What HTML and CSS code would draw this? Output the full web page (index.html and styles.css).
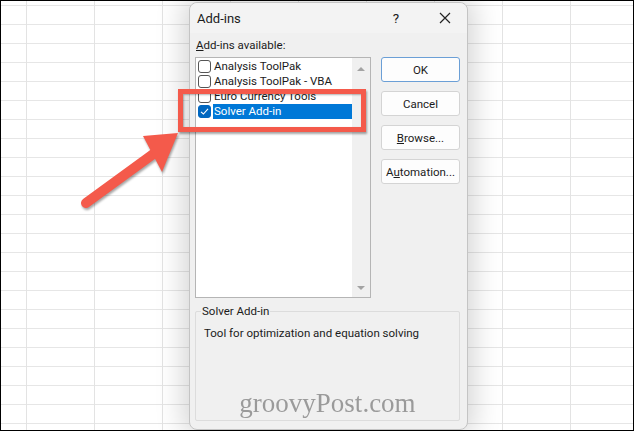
FILE: index.html
```html
<!DOCTYPE html>
<html lang="en">
<head>
    <meta charset="UTF-8">
    <title>Add-ins</title>
    <link rel="stylesheet" href="styles.css">
</head>
<body>
    <div class="screen">
        <div class="dialog">
            <div class="title-bar">
                <span class="title">Add-ins</span>
                <span class="help">?</span>
                <svg class="close" width="12" height="12" viewBox="0 0 12 12">
                    <path d="M1 1 L11 11 M11 1 L1 11" stroke="#222" stroke-width="1.2" fill="none"/>
                </svg>
            </div>
            <p class="label"><u>A</u>dd-ins available:</p>
            <div class="main">
                <div class="list">
                    <div class="items">
                        <div class="item"><span class="check"></span><span class="name">Analysis ToolPak</span></div>
                        <div class="item"><span class="check"></span><span class="name">Analysis ToolPak - VBA</span></div>
                        <div class="item"><span class="check"></span><span class="name">Euro Currency Tools</span></div>
                        <div class="item selected">
                            <span class="check checked">
                                <svg width="9" height="9" viewBox="0 0 9 9"><path d="M1 4.8 L3.4 7 L8 1.8" stroke="#fff" stroke-width="1.1" fill="none"/></svg>
                            </span>
                            <span class="name">Solver Add-in</span>
                        </div>
                    </div>
                    <div class="scrollbar">
                        <span class="arrow-up"></span>
                        <span class="arrow-down"></span>
                    </div>
                </div>
                <div class="buttons">
                    <button class="btn default">OK</button>
                    <button class="btn">Cancel</button>
                    <button class="btn"><u>B</u>rowse...</button>
                    <button class="btn">A<u>u</u>tomation...</button>
                </div>
            </div>
            <div class="group">
                <span class="legend">Solver Add-in</span>
                <p class="desc">Tool for optimization and equation solving</p>
                <p class="watermark">groovyPost.com</p>
            </div>
        </div>

        <div class="highlight"></div>
        <svg class="pointer" width="120" height="100" viewBox="70 120 120 100">
            <line x1="86" y1="203" x2="156" y2="152" stroke="#f45a4b" stroke-width="10" stroke-linecap="round"/>
            <polygon points="178,133 143,136 162,172" fill="#f45a4b"/>
        </svg>
    </div>
</body>
</html>
```
FILE: styles.css
```css
* {
    box-sizing: border-box;
    margin: 0;
    padding: 0;
}

body {
    font-family: Roboto, 'Noto Sans', sans-serif;
    background: #fff;
}

.screen {
    position: relative;
    width: 634px;
    height: 431px;
    border: 1px solid #000;
    overflow: hidden;
    padding: 1px 0 0 188px;
    background-color: #fff;
    background-image:
        repeating-linear-gradient(90deg, transparent 0 25px, #e3e3e3 25px 26px, transparent 26px 68px),
        repeating-linear-gradient(180deg, transparent 0 4px, #e6e6e6 4px 5px, transparent 5px 19px);
}

.dialog {
    display: flex;
    flex-direction: column;
    width: 279px;
    height: 428px;
    background: #f0f0f0;
    border: 1px solid #c4c4c4;
    border-radius: 8px;
    box-shadow: 0 0 28px 6px rgba(0, 0, 0, 0.17);
    color: #1b1b1b;
    font-size: 11.5px;
}

.title-bar {
    display: flex;
    align-items: center;
    height: 30px;
    padding: 0 0 0 7px;
    background: #f3f3f3;
    border-radius: 8px 8px 0 0;
}

.title {
    flex: 1;
    font-size: 13px;
}

.help {
    width: 20px;
    text-align: center;
    font-size: 13.5px;
    margin-right: 33px;
}

.close {
    margin-right: 16px;
}

.label {
    padding: 5px 0 0 6px;
    height: 24px;
    line-height: 15px;
}

.main {
    display: flex;
    gap: 10px;
    padding-left: 5px;
}

.list {
    display: flex;
    width: 176px;
    height: 241px;
    background: #fff;
    border: 1px solid #b5b5b5;
}

.items {
    flex: 1;
    padding: 1px 0 0 2px;
}

.item {
    display: flex;
    align-items: center;
    height: 15px;
    gap: 2px;
    white-space: nowrap;
    font-size: 11.5px;
}

.check {
    display: inline-flex;
    align-items: center;
    justify-content: center;
    width: 13px;
    height: 13px;
    border: 1px solid #555;
    border-radius: 3px;
    background: #fff;
}

.check.checked {
    background: #0067c0;
    border-color: #0067c0;
}

.name {
    padding: 0 1px;
    line-height: 15px;
}

.selected .name {
    flex: 1;
    background: #0078d7;
    color: #fff;
}

.scrollbar {
    display: flex;
    flex-direction: column;
    justify-content: space-between;
    align-items: center;
    width: 18px;
    padding: 9px 0 7px;
    background: #f0f0f0;
}

.arrow-up,
.arrow-down {
    width: 0;
    height: 0;
    border-left: 4px solid transparent;
    border-right: 4px solid transparent;
}

.arrow-up {
    border-bottom: 4px solid #a3a3a3;
}

.arrow-down {
    border-top: 4px solid #a3a3a3;
}

.buttons {
    display: flex;
    flex-direction: column;
    gap: 9px;
    width: 79px;
}

.btn {
    height: 25px;
    font-family: inherit;
    font-size: 11.5px;
    color: #1b1b1b;
    background: #fdfdfd;
    border: 1px solid #d4d4d4;
    border-radius: 3px;
}

.btn.default {
    border-color: #6b9fd6;
}

.group {
    display: flex;
    flex-direction: column;
    margin: 13px 0 0 5px;
    width: 265px;
    height: 110px;
    border: 1px solid #dcdcdc;
    border-radius: 2px;
}

.legend {
    margin: -8px 0 0 5px;
    padding: 0 1px;
    background: #f0f0f0;
    align-self: flex-start;
    line-height: 14px;
}

.desc {
    margin: 8px 0 0 8px;
}

.watermark {
    margin-top: auto;
    margin-bottom: 1px;
    text-align: center;
    font-family: 'Liberation Serif', serif;
    font-size: 27px;
    color: #8c8c8c;
    opacity: 0.85;
}

.highlight {
    position: absolute;
    left: 177px;
    top: 88px;
    width: 188px;
    height: 43px;
    border: 5px solid #f45a4b;
    box-shadow: 1px 2px 2px rgba(0, 0, 0, 0.35), inset 1px 1px 2px rgba(0, 0, 0, 0.3);
}

.pointer {
    position: absolute;
    left: 69px;
    top: 119px;
    filter: drop-shadow(1px 2px 1px rgba(0, 0, 0, 0.35));
}
```
